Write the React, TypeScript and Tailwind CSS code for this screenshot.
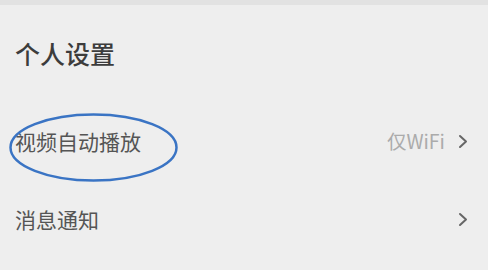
const rows = [
  { label: "视频自动播放", value: "仅WiFi" },
  { label: "消息通知", value: "" },
];

const Chevron = () => (
  <svg width="10" height="15" viewBox="0 0 10 15" className="text-[#666666]">
    <path d="M2 2 L8 7.5 L2 13" fill="none" stroke="currentColor" strokeWidth="2" strokeLinecap="round" strokeLinejoin="round" />
  </svg>
);

export default function App() {
  return (
    <div
      className="relative w-[488px] h-[270px] overflow-hidden bg-[#eeeeee]"
      style={{ fontFamily: '"Noto Sans CJK SC", "Noto Sans", sans-serif' }}
    >
      <div className="h-[5px] bg-[#e2e2e2]" />

      <div className="h-[97px] flex items-center px-[15px]">
        <h1 className="text-[25px] font-medium text-[#3c3c3c] leading-none">个人设置</h1>
      </div>

      {rows.map((row) => (
        <div key={row.label} className="h-[78px] flex items-center justify-between pl-[15px] pr-[20px]">
          <span className="text-[21px] text-[#555555] leading-none">{row.label}</span>
          <div className="flex items-center gap-[13px]">
            {row.value && (
              <span className="text-[19.5px] text-[#ababab] leading-none">{row.value}</span>
            )}
            <Chevron />
          </div>
        </div>
      ))}

      {/* annotation circle */}
      <svg className="absolute left-0 top-0 pointer-events-none" width="488" height="270">
        <ellipse cx="93.5" cy="147.5" rx="83" ry="33" fill="none" stroke="#3a74c4" strokeWidth="2.5" />
      </svg>
    </div>
  );
}
